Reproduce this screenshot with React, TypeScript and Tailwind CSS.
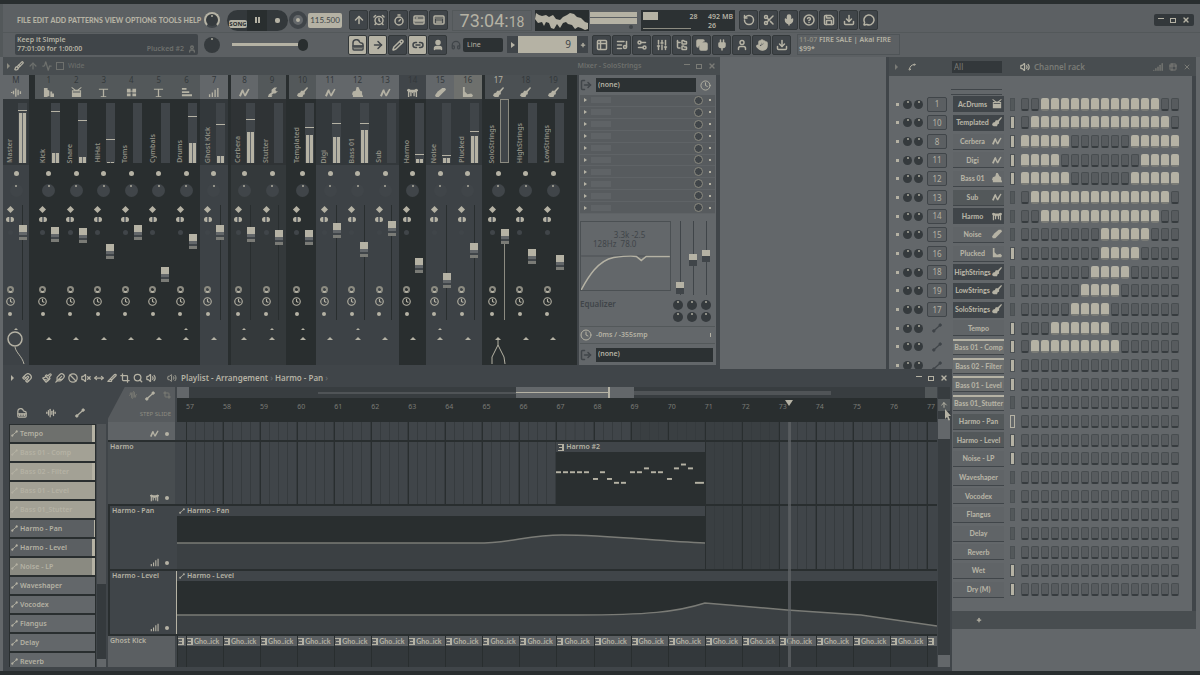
import { clsx } from 'clsx'
import {
  Activity,
  AlarmClock,
  ArrowRight,
  ArrowUp,
  AudioLines,
  AudioWaveform,
  Brush,
  CircleHelp,
  Clock,
  Copy,
  Crop,
  Download,
  Feather,
  FolderTree,
  Hand,
  Headphones,
  Keyboard,
  KeyboardMusic,
  Link2,
  ListMusic,
  LogOut,
  Magnet,
  MessageCircle,
  Mic,
  MoveHorizontal,
  Paintbrush,
  Pencil,
  Piano,
  Plug,
  Plus,
  RotateCcw,
  Save,
  Scissors,
  Search,
  Settings2,
  Signal,
  SlidersVertical,
  Slice,
  Spline,
  Table2,
  Timer,
  User,
  Volume2,
  VolumeX,
  Ban,
  X,
  type LucideIcon,
} from 'lucide-react'

const MENU = ['FILE', 'EDIT', 'ADD', 'PATTERNS', 'VIEW', 'OPTIONS', 'TOOLS', 'HELP']

type Tool = { label: string; icon: LucideIcon; active?: boolean; fill?: boolean }

const RECORD_TOOLS: Tool[] = [
  { label: 'Metronome', icon: ArrowUp },
  { label: 'Wait for input', icon: AlarmClock },
  { label: 'Countdown', icon: Timer },
  { label: 'Overdub', icon: KeyboardMusic },
  { label: 'Loop record', icon: Keyboard },
]

const EDIT_TOOLS: Tool[] = [
  { label: 'Step edit', icon: Piano, active: true },
  { label: 'Auto scroll', icon: ArrowRight, active: true },
  { label: 'Draw', icon: Pencil },
  { label: 'Link', icon: Link2, active: true },
  { label: 'Typing keyboard', icon: User, fill: true },
]

const SYSTEM_TOOLS: Tool[] = [
  { label: 'Undo', icon: RotateCcw },
  { label: 'Cut', icon: Scissors },
  { label: 'Record audio', icon: Mic, fill: true },
  { label: 'Help', icon: CircleHelp },
  { label: 'Save', icon: Save },
  { label: 'Export', icon: Download },
  { label: 'News', icon: MessageCircle },
]

const VIEW_TOOLS: Tool[] = [
  { label: 'Playlist', icon: Table2 },
  { label: 'Piano roll', icon: ListMusic },
  { label: 'Channel rack', icon: Settings2 },
  { label: 'Mixer', icon: SlidersVertical },
  { label: 'Browser', icon: FolderTree },
  { label: 'Copy', icon: Copy, fill: true },
  { label: 'Plugins', icon: Plug, fill: true },
  { label: 'Tempo tapper', icon: User },
  { label: 'Touch', icon: Hand, fill: true },
  { label: 'Download', icon: Download },
]

type Track = {
  id: string
  name: string
  icon: string
  head: string
  body: string
  fader: number
  level?: number
  peak?: number
  send?: boolean
  gap?: boolean
  selected?: boolean
}

const HEAD_DARK = 'bg-[#53585a]'
const HEAD_LIGHT = 'bg-[#63676a]'
const BODY_DARK = 'bg-[#292e2f]'
const BODY_SOFT = 'bg-[#34393b]'
const BODY_LIGHT = 'bg-[#3d4246]'

const MASTER: Track = { id: 'M', name: 'Master', icon: 'wave', head: HEAD_LIGHT, body: BODY_LIGHT, fader: 80, level: 50, peak: 52, send: true }

const TRACKS: Track[] = [
  { id: '1', name: 'Kick', icon: 'kit', head: HEAD_DARK, body: BODY_DARK, fader: 78, level: 10, peak: 51 },
  { id: '2', name: 'Snare', icon: 'drum', head: HEAD_DARK, body: BODY_DARK, fader: 77, level: 6, peak: 42 },
  { id: '3', name: 'HiHat', icon: 'hat', head: HEAD_DARK, body: BODY_DARK, fader: 61, level: 1, peak: 23 },
  { id: '4', name: 'Toms', icon: 'toms', head: HEAD_DARK, body: BODY_DARK, fader: 80 },
  { id: '5', name: 'Cymbals', icon: 'hat', head: HEAD_DARK, body: BODY_DARK, fader: 38 },
  { id: '6', name: 'Drums', icon: 'lines', head: HEAD_DARK, body: BODY_DARK, fader: 71, level: 20, peak: 46, send: true },
  { id: '7', name: 'Ghost Kick', icon: 'bars', head: HEAD_LIGHT, body: BODY_LIGHT, fader: 80, level: 7, peak: 38 },
  { id: '8', name: 'Cerbera', icon: 'zig', head: HEAD_LIGHT, body: BODY_SOFT, fader: 78, level: 31, peak: 43, send: true, gap: true },
  { id: '9', name: 'Stutter', icon: 'wrench', head: HEAD_DARK, body: BODY_SOFT, fader: 75, send: true },
  { id: '10', name: 'Templated', icon: 'guitar', head: HEAD_DARK, body: BODY_DARK, fader: 75, level: 28, peak: 35, send: true, gap: true },
  { id: '11', name: 'Digi', icon: 'zig', head: HEAD_LIGHT, body: BODY_LIGHT, fader: 82, level: 26, peak: 39 },
  { id: '12', name: 'Bass 01', icon: 'bass', head: HEAD_LIGHT, body: BODY_LIGHT, fader: 63, level: 33, peak: 39, send: true },
  { id: '13', name: 'Sub', icon: 'zig', head: HEAD_LIGHT, body: BODY_LIGHT, fader: 84 },
  { id: '14', name: 'Harmo', icon: 'harmo', head: 'bg-[#404549]', body: BODY_DARK, fader: 47, level: 4, peak: 8 },
  { id: '15', name: 'Noise', icon: 'noise', head: HEAD_LIGHT, body: BODY_LIGHT, fader: 32, level: 5, peak: 7, send: true },
  { id: '16', name: 'Plucked', icon: 'pluck', head: 'bg-[#6e706d]', body: BODY_LIGHT, fader: 62, level: 27, peak: 31 },
  { id: '17', name: 'SoloStrings', icon: 'guitar', head: 'bg-[#4b5053]', body: BODY_DARK, fader: 76, gap: true, selected: true },
  { id: '18', name: 'HighStrings', icon: 'guitar', head: 'bg-[#4b5053]', body: BODY_DARK, fader: 56 },
  { id: '19', name: 'LowStrings', icon: 'guitar', head: 'bg-[#4b5053]', body: BODY_DARK, fader: 50 },
]

type Channel = {
  name: string
  no?: string
  icon?: string
  look: string
  on?: number[][]
  select?: 'lit' | 'focus'
}

const FLAT = 'bg-[#606467]'
const DARK = 'bg-[#404549]'
const MIXED = 'bg-[#53585a]'
const GLOW = 'bg-[#6b6e6e] border-t-2 border-t-[#b5b2a4]'

const CHANNELS: Channel[] = [
  { name: 'AcDrums', no: '1', icon: 'drum', look: DARK, on: [[2, 13]] },
  { name: 'Templated', no: '10', icon: 'guitar', look: DARK, on: [[1, 14]], select: 'lit' },
  { name: 'Cerbera', no: '8', icon: 'zig', look: FLAT, on: [[0, 4], [11, 15]], select: 'lit' },
  { name: 'Digi', no: '11', icon: 'zig', look: FLAT, on: [[0, 3], [12, 15]], select: 'lit' },
  { name: 'Bass 01', no: '12', icon: 'bass', look: FLAT, on: [[0, 4], [11, 15]], select: 'lit' },
  { name: 'Sub', no: '13', icon: 'zig', look: MIXED, on: [[1, 14]] },
  { name: 'Harmo', no: '14', icon: 'harmo', look: DARK, on: [[2, 13]] },
  { name: 'Noise', no: '15', icon: 'noise', look: FLAT, on: [[8, 12]] },
  { name: 'Plucked', no: '16', icon: 'pluck', look: FLAT, on: [[8, 11]], select: 'lit' },
  { name: 'HighStrings', no: '18', icon: 'guitar', look: DARK, on: [[7, 10]] },
  { name: 'LowStrings', no: '19', icon: 'guitar', look: DARK, on: [[6, 9]] },
  { name: 'SoloStrings', no: '17', icon: 'guitar', look: DARK, on: [[5, 8]] },
  { name: 'Tempo', look: FLAT, on: [[3, 8]], select: 'lit' },
  { name: 'Bass 01 - Comp', look: GLOW, on: [[1, 9]], select: 'lit' },
  { name: 'Bass 02 - Filter', look: GLOW, select: 'lit' },
  { name: 'Bass 01 - Level', look: GLOW, select: 'lit' },
  { name: 'Bass 01_Stutter', look: GLOW },
  { name: 'Harmo - Pan', look: MIXED, select: 'focus' },
  { name: 'Harmo - Level', look: MIXED, select: 'lit' },
  { name: 'Noise - LP', look: FLAT, select: 'lit' },
  { name: 'Waveshaper', look: FLAT },
  { name: 'Vocodex', look: FLAT },
  { name: 'Flangus', look: FLAT },
  { name: 'Delay', look: FLAT },
  { name: 'Reverb', look: FLAT },
  { name: 'Wet', look: FLAT, select: 'lit' },
  { name: 'Dry (M)', look: FLAT, select: 'lit' },
]

const PICKER = [
  { name: 'Tempo', look: 'bg-[#6e706d] text-[#b5b2a4] border-r-[3px] border-r-[#b5b2a4]' },
  { name: 'Bass 01 - Comp', look: 'bg-[#a3a195] text-[#b5b2a4]' },
  { name: 'Bass 02 - Filter', look: 'bg-[#a3a195] text-[#b5b2a4] border-r-[3px] border-r-[#b5b2a4]' },
  { name: 'Bass 01 - Level', look: 'bg-[#a3a195] text-[#b5b2a4]' },
  { name: 'Bass 01_Stutter', look: 'bg-[#a3a195] text-[#b5b2a4]' },
  { name: 'Harmo - Pan', look: 'bg-[#5b5f62] text-[#b5b2a4] border-r border-r-[#b5b2a4]' },
  { name: 'Harmo - Level', look: 'bg-[#5b5f62] text-[#b5b2a4] border-r-[3px] border-r-[#b5b2a4]' },
  { name: 'Noise - LP', look: 'bg-[#8a8a81] text-[#b5b2a4] border-r-[3px] border-r-[#b5b2a4]' },
  { name: 'Waveshaper', look: 'bg-[#63676a] text-[#b5b2a4]' },
  { name: 'Vocodex', look: 'bg-[#63676a] text-[#b5b2a4]' },
  { name: 'Flangus', look: 'bg-[#63676a] text-[#b5b2a4]' },
  { name: 'Delay', look: 'bg-[#63676a] text-[#b5b2a4]' },
  { name: 'Reverb', look: 'bg-[#63676a] text-[#b5b2a4]' },
]

const BARS = Array.from({ length: 20 }, (_, i) => 57 + i)

// x, y and width of each note, in units of the 149 x 54 clip
const NOTES = [
  [0, 20, 5], [7, 20, 5], [14, 20, 5], [21, 20, 5], [28, 20, 5], [37, 27, 5], [44, 20, 5], [51, 27, 5],
  [58, 31, 5], [65, 31, 5], [74, 20, 5], [81, 20, 5], [88, 16, 5], [95, 20, 5], [102, 20, 5], [111, 27, 5],
  [118, 16, 5], [125, 12, 5], [132, 16, 5], [139, 31, 9],
]

function Glyph({ name, className }: { name: string; className?: string }) {
  const paths: Record<string, string> = {
    wave: 'M0 5.500h1.500v1H0zM2 4h1.500v4H2zM4.500 1.500H6v9H4.500zM7 3h1.500v6H7zM9.500 4.500H11v3H9.500z',
    kit: 'M1 1h4v2l2 1v6H5v1H1zM8 5h2v2h2v4H8z',
    drum: 'M1 0l4 3h2l4-3 .6.8L8.500 3.500H11V11H1V3.500h2.500L.4.800zM2 5v1h8V5z',
    hat: 'M1 2h10v1H6.700v7H9v1H3v-1h2.300V3H1z',
    toms: 'M1 2h4v4H1zM7 2h4v4H7zM1 7h4v3H1zM7 7h4v3H7zM5 4h2v1H5z',
    lines: 'M1 1h5v2H1zM1 4.500h8v2H1zM1 8h11v2H1z',
    bars: 'M1 8h1.500v3H1zM4 6h1.500v5H4zM7 3h1.500v8H7zM10 1h1.500v10H10z',
    zig: 'M0 9.500L3 3l1.500-.5 2 5L10 2l1.500.5L7.500 10H6L4 6 2 10.500z',
    wrench: 'M5 3l3-2.500h3L9 3l1 1.500h2L9 7H7L4.500 9H6l-1 2H1l1-3 3-2z',
    guitar: 'M11 0l1 1-3.500 4.500V8L7 8.500 6 11H2L0 9.500 1 7l2.500-1L4.500 4H7z',
    bass: 'M5 0h2l2 4 2 1v3l1 2v1H1V9l-1-1 1-3 3-1z',
    harmo: 'M0 3l2-1 2 1h4l2-1 2 1v2l-1-1v7h-1.500V6L8.500 5.500V10H7V5.500L6 7 5 5.500V10H3.500V5.500L2.500 6v5H1V4L0 5z',
    noise: 'M8 1h3l1 2-5 5-3 3H1L0 9l3-4z',
    pluck: 'M1 0h2v5l3 3 4-1 2 2-1 2H1z',
  }
  return (
    <svg viewBox="0 0 12 12" className={clsx('shrink-0 fill-[#b5b2a4]', className)} aria-hidden>
      <path d={paths[name]} />
    </svg>
  )
}

function AutomationGlyph({ className }: { className?: string }) {
  return (
    <svg viewBox="0 0 12 12" className={clsx('shrink-0 fill-current stroke-current', className)} aria-hidden>
      <path d="M2 9.500L10 2.500" strokeWidth="1.500" />
      <circle cx="2.200" cy="9.500" r="1.500" />
      <circle cx="9.800" cy="2.500" r="1.500" />
    </svg>
  )
}

function PatternGlyph({ className }: { className?: string }) {
  return (
    <svg viewBox="0 0 6 7" className={clsx('shrink-0 fill-current', className)} aria-hidden>
      <path d="M0 0h6v7H0V6h4V4H1V3h3V1H0z" />
    </svg>
  )
}

function Knob({ className }: { className?: string }) {
  return (
    <span className={clsx('flex shrink-0 justify-center rounded-full bg-[#353a3d]', className)}>
      <span className="mt-px h-0.5 w-0.5 bg-[#b5b2a4]/70" />
    </span>
  )
}

function ToolButton({ label, icon: Icon, active, fill }: Tool) {
  return (
    <button
      type="button"
      aria-label={label}
      className={clsx(
        'flex h-5 w-[19px] items-center justify-center rounded-xs border border-[#33383a]',
        active ? 'bg-[#b5b2a4] text-[#404549]' : 'bg-[#404549] text-[#b5b2a4]',
      )}
    >
      <Icon className="h-3 w-3" strokeWidth={3} fill={fill ? 'currentColor' : 'none'} />
    </button>
  )
}

function WindowButtons({ className }: { className?: string }) {
  return (
    <div className={clsx('flex items-center gap-1', className)}>
      <button type="button" aria-label="Minimize" className="flex h-2 w-2 items-start pt-0.5">
        <span className="h-px w-1.5 bg-current" />
      </button>
      <button type="button" aria-label="Maximize" className="flex h-2 w-2 items-center">
        <span className="h-[5px] w-1.5 border border-current" />
      </button>
      <button type="button" aria-label="Close" className="h-2 w-2">
        <X className="h-2 w-2" strokeWidth={4} />
      </button>
    </div>
  )
}

function Transport() {
  return (
    <div className="flex h-6 items-center">
      <nav className="flex w-[197px] shrink-0 gap-0.5 pl-3.5 font-['Lato',sans-serif] text-[7px] font-black">
        {MENU.map((item) => (
          <button key={item} type="button">
            {item}
          </button>
        ))}
      </nav>
      <div className="flex w-6 justify-center">
        <Knob className="h-4 w-4 border-2 border-[#b5b2a4] border-b-[#404549]" />
      </div>
      <div className="ml-[3px] flex h-[21px] w-[61px] items-center overflow-hidden rounded-full bg-[#33383b]">
        <button type="button" className="mt-2 ml-0.5 h-2 w-[18px] rounded-xs bg-[#b5b2a4] text-[6px] leading-2 font-bold text-[#292e2f]">
          SONG
        </button>
        <button type="button" aria-label="Pause" className="flex h-full w-5 items-center justify-center gap-px bg-[#292e2f]">
          <span className="h-1.5 w-0.5 bg-[#b5b2a4]" />
          <span className="h-1.5 w-0.5 bg-[#b5b2a4]" />
        </button>
        <button type="button" aria-label="Stop" className="flex h-full flex-1 items-center justify-center">
          <span className="h-[5px] w-[5px] rounded-xs bg-[#b5b2a4]" />
        </button>
      </div>
      <button type="button" aria-label="Record" className="ml-px flex h-[18px] w-[18px] items-center justify-center rounded-full border-4 border-[#404549] bg-[#63676a]">
        <span className="h-1 w-1 rounded-full bg-[#b5b2a4]" />
      </button>
      <output className="ml-px flex h-[15px] w-[34px] items-center justify-center rounded-xs bg-[#b5b2a4] font-['Lato',sans-serif] text-[8px] text-[#404549]">
        115.500
      </output>
      <div className="ml-[7px] flex gap-px">
        {RECORD_TOOLS.map((tool) => (
          <ToolButton key={tool.label} {...tool} />
        ))}
      </div>
      <div className="ml-1 flex h-[21px] w-20 items-baseline justify-center border border-[#53585a] font-['Roboto',sans-serif] leading-[19px]">
        <span className="text-[18px]">73:04:</span>
        <span className="text-[14px]">18</span>
      </div>
      <div className="ml-[3px] h-[21px] w-[54px] bg-[#292e2f]">
        <svg viewBox="0 0 54 21" preserveAspectRatio="none" className="h-full w-full fill-[#b5b2a4]" aria-hidden>
          <path d="M1 3l3 2 3 1 4-1 3 2 4-2 3 4 4 1 3-3 4-2 3-2 4 1 3 3 4 1 4 4 3 1v6l-3 1-4-2-3-1-3 2-3-4-4-1-2-2-3 1-3 5-3-4-3 5-3-1-2-5-3-1-2 4-2-4-4 1-3-4z" />
        </svg>
      </div>
      <div className="ml-px flex h-[21px] w-[47px] flex-col gap-px pt-0.5">
        <span className="h-[5px] bg-[#b5b2a4]" />
        <span className="h-[6px] bg-[#b5b2a4]" />
        <span className="mr-1 h-1 w-1 self-end rounded-full bg-[#404549]" />
      </div>
      <div className="ml-1 flex h-[21px] w-[94px] justify-between bg-[#2c3133] p-0.5 text-[7px] leading-[9px] font-semibold">
        <div className="flex flex-col justify-between">
          <span className="h-2 w-[15px] bg-[#b5b2a4]" />
          <span className="h-px w-12 bg-[#8c8b81]" />
        </div>
        <span className="-ml-3">28</span>
        <div className="flex flex-col">
          <span>492 MB</span>
          <span>26</span>
        </div>
      </div>
      <div className="ml-1 flex gap-px">
        {SYSTEM_TOOLS.map((tool) => (
          <ToolButton key={tool.label} {...tool} />
        ))}
      </div>
      <WindowButtons className="mr-1.5 ml-auto h-3 rounded-xs bg-[#33383b] px-1" />
    </div>
  )
}

function PatternBar() {
  return (
    <div className="flex h-[23px] items-center">
      <div className="ml-3 flex h-[21px] w-[183px] items-end justify-between rounded-xs bg-[#404549] px-0.5 text-[7px] leading-[9px] font-semibold">
        <div className="flex flex-col pb-0.5">
          <span>Keep it Simple</span>
          <span>77:01:00 for 1:00:00</span>
        </div>
        <div className="flex items-center gap-1 pb-0.5 text-[#6e706d]">
          <span>Plucked #2</span>
          <User className="h-2 w-2" strokeWidth={4} />
        </div>
      </div>
      <div className="ml-0.5 flex w-6 justify-center">
        <Knob className="h-4 w-4" />
      </div>
      <input
        type="range"
        aria-label="Master pitch"
        defaultValue={100}
        className="ml-2 h-3 w-[76px] appearance-none bg-[linear-gradient(#b5b2a4,#b5b2a4)] bg-[length:68px_3px] bg-left bg-no-repeat [&::-webkit-slider-thumb]:h-3 [&::-webkit-slider-thumb]:w-2.5 [&::-webkit-slider-thumb]:appearance-none [&::-webkit-slider-thumb]:rounded-full [&::-webkit-slider-thumb]:bg-[#292e2f]"
      />
      <div className="ml-10 flex gap-px">
        {EDIT_TOOLS.map((tool) => (
          <ToolButton key={tool.label} {...tool} />
        ))}
      </div>
      <Headphones className="ml-1 h-2.5 w-2.5 text-[#404549]" strokeWidth={3} />
      <select aria-label="Snap" className="ml-0.5 h-3.5 w-10 appearance-none rounded-xs bg-[#2c3133] px-1 text-[7px] leading-3">
        <option>Line</option>
      </select>
      <div className="ml-1 flex h-[17px] w-[81px]">
        <button type="button" aria-label="Previous pattern" className="flex w-[11px] items-center justify-center bg-[#404549]">
          <span className="border-y-3 border-l-4 border-y-transparent border-l-[#b5b2a4]" />
        </button>
        <output className="flex-1 bg-[#b5b2a4] pr-1.5 text-right text-[10px] leading-4 text-[#404549]">9</output>
        <button type="button" aria-label="Add pattern" className="flex w-[11px] items-center justify-center bg-[#404549]">
          <Plus className="h-1.5 w-1.5" strokeWidth={5} />
        </button>
      </div>
      <div className="ml-1 flex gap-px">
        {VIEW_TOOLS.map((tool) => (
          <ToolButton key={tool.label} {...tool} />
        ))}
      </div>
      <div className="ml-1.5 h-[21px] w-[103px] overflow-hidden border border-[#4f5457] pl-px text-[7px] leading-[9px] font-semibold">
        <p>
          <span className="text-[#8c8b81]">11-07</span> FIRE SALE | Akai FIRE
        </p>
        <p>$99*</p>
      </div>
    </div>
  )
}

function StereoKnobs() {
  return (
    <>
      <span className="mb-[5px] h-[5px] w-[5px] rotate-45 bg-[#b5b2a4]" />
      <span className="h-[5px] w-2 rounded-full border-x-3 border-[#b5b2a4] bg-[#63676a]" />
    </>
  )
}

function MixerTrack({ track, className }: { track: Track; className?: string }) {
  return (
    <div className={clsx('flex min-w-0 flex-col items-center', track.body, className)}>
      <div className={clsx('flex h-6 w-full flex-col items-center justify-between pb-px', track.head)}>
        <span className={clsx('text-[8px] leading-[10px]', track.selected ? 'text-[#b5b2a4]' : 'text-[#33383b]')}>{track.id}</span>
        <Glyph name={track.icon} className="h-[11px] w-[11px]" />
      </div>
      <div className="flex h-[66px] w-full items-end justify-center gap-1 bg-[#292e2f]/50 pb-0.5">
        <span className="w-[9px] rotate-180 text-[7px] leading-[9px] font-semibold whitespace-nowrap text-[#8c8b81] [writing-mode:vertical-rl]">
          {track.name}
        </span>
        <div
          className={clsx(
            'flex w-[9px] flex-col justify-end bg-[#404549]',
            track.selected ? 'h-16 border border-[#8c8b81]' : 'h-[60px]',
          )}
        >
          {track.peak && <span className="h-px w-full bg-[#b5b2a4]" />}
          {track.level && (
            <span
              className="mx-px border-x-3 border-[#b5b2a4] bg-[#63676a]"
              style={{ height: track.level, marginTop: (track.peak ?? 0) - track.level }}
            />
          )}
        </div>
      </div>
      <span className="mt-1.5 h-[5px] w-[5px] rounded-full bg-[#b5b2a4]" />
      <Knob className="mt-2 h-[13px] w-[13px] !bg-[#404549]" />
      <div className="mt-2 flex h-[115px] w-full justify-center gap-1">
        <div className="flex w-[9px] flex-col items-center pt-0.5">
          <StereoKnobs />
          <span className="mt-2 h-[5px] w-[5px] rounded-full bg-[#404549]" />
          <span className="mt-[51px] h-[7px] w-[7px] rounded-full border-2 border-[#8c8b81] border-b-[#b5b2a4]" />
          <Clock className="mt-1 h-[9px] w-[9px] text-[#b5b2a4]" strokeWidth={3} />
          <span className="mt-1.5 h-1 w-1 rounded-full bg-[#b5b2a4]" />
        </div>
        <input
          type="range"
          aria-label={`${track.name} volume`}
          defaultValue={track.fader}
          className={clsx(
            'h-[115px] w-2 appearance-none bg-[length:1px_100%] bg-center bg-no-repeat [direction:rtl] [writing-mode:vertical-lr] [&::-webkit-slider-thumb]:h-[15px] [&::-webkit-slider-thumb]:w-2 [&::-webkit-slider-thumb]:appearance-none [&::-webkit-slider-thumb]:bg-[linear-gradient(#b5b2a4_7px,#63676a_7px,#63676a_10px,#404549_10px,#404549_12px,#7a7b76_12px)]',
            track.selected ? 'bg-[linear-gradient(transparent_35px,#8c8b81_35px)]' : 'bg-[linear-gradient(#292e2f,#292e2f)]',
          )}
        />
      </div>
      <div className="flex flex-col items-center gap-1.5 pt-2">
        <span className={clsx('border-x-2 border-b-2 border-x-transparent', track.send ? 'border-b-[#b5b2a4]' : 'border-b-transparent')} />
        <span className="mt-px border-x-3 border-b-3 border-x-transparent border-b-[#b5b2a4]" />
      </div>
      {track.selected && (
        <svg viewBox="0 0 20 24" className="h-6 w-5 fill-none stroke-[#b5b2a4]" aria-hidden>
          <path d="M10 0v5M10 5L4 17v7M10 5l6 12 1 7" />
        </svg>
      )}
    </div>
  )
}

function EffectSlots() {
  return (
    <ul className="flex h-[119px] flex-col bg-[#575b5e]">
      {Array.from({ length: 10 }, (_, i) => (
        <li key={i} className="flex flex-1 items-center justify-between border-b border-[#5f6366] pr-1 pl-1">
          <span className="border-y-2 border-l-3 border-y-transparent border-l-[#b5b2a4]" />
          <span className="ml-1 h-1.5 w-5 bg-[#5f6366]" />
          <span className="ml-auto h-[9px] w-[9px] rounded-full border border-[#8c8b81] bg-[#404549]" />
          <span className="ml-1.5 h-0.5 w-0.5 bg-[#b5b2a4]" />
        </li>
      ))}
    </ul>
  )
}

function Equalizer() {
  const bands = [2, 47, 54]
  return (
    <div className="flex flex-col pt-[7px]">
      <div className="flex gap-1">
        <div className="relative h-[70px] w-[91px] border border-[#4b5053]">
          <svg viewBox="0 0 90 69" className="h-full w-full fill-none stroke-[#b5b2a4]" aria-hidden>
            <path d="M0 34.500h90" className="stroke-[#4b5053]" />
            <path d="M0 69C7 56 17 39 33 36c8-1 17-2 23-1l5 4 5-4h24" strokeWidth="1.500" />
          </svg>
          <p className="absolute top-2 left-3 text-[8px] leading-[9px] whitespace-pre text-[#404549]">
            {'          3.3k -2.5\n128Hz  78.0'}
          </p>
        </div>
        <div className="flex flex-1 justify-between pr-1">
          {bands.map((gain, i) => (
            <input
              key={i}
              type="range"
              aria-label={`Band ${i + 1} gain`}
              defaultValue={gain}
              className="h-[74px] w-2.5 appearance-none bg-[linear-gradient(#404549,#404549)] bg-[length:1px_100%] bg-center bg-no-repeat [direction:rtl] [writing-mode:vertical-lr] [&::-webkit-slider-thumb]:h-3 [&::-webkit-slider-thumb]:w-2 [&::-webkit-slider-thumb]:appearance-none [&::-webkit-slider-thumb]:bg-[linear-gradient(#b5b2a4_6px,#404549_6px)]"
            />
          ))}
        </div>
      </div>
      <div className="flex h-[31px] justify-between pt-[3px] pr-1 text-[8px] text-[#404549]">
        <span className="font-semibold">Equalizer</span>
        <div className="grid grid-cols-3 content-start gap-x-1 gap-y-0.5 pt-0.5">
          {Array.from({ length: 6 }, (_, i) => (
            <Knob key={i} className="h-2.5 w-2.5" />
          ))}
        </div>
      </div>
    </div>
  )
}

function Mixer() {
  return (
    <section className="absolute top-0 left-0 flex h-[312px] w-[717px] flex-col bg-[#404549]">
      <header className="flex h-[18px] items-center gap-1 bg-[#484d50] px-1 text-[7px] text-[#6e706d]">
        <span className="border-y-3 border-l-3 border-y-transparent border-l-[#8c8b81]" />
        <Brush className="h-2.5 w-2.5 text-[#b5b2a4]" strokeWidth={3} />
        <ArrowUp className="h-2.5 w-2.5" strokeWidth={3} />
        <Activity className="h-2.5 w-2.5" strokeWidth={3} />
        <span className="h-2 w-2 border border-current" />
        <span>Wide</span>
        <h2 className="ml-[489px] font-semibold">Mixer - SoloStrings</h2>
        <WindowButtons className="ml-auto text-[#7a7b76]" />
      </header>
      <div className="flex h-[290px]">
        <div className="flex flex-1 bg-[#292e2f] pr-2.5">
          <div className="relative flex">
            <MixerTrack track={MASTER} className="w-[26px]" />
            <svg viewBox="0 0 26 40" className="absolute bottom-0 left-0 h-10 w-[26px] fill-none stroke-[#b5b2a4]" aria-hidden>
              <circle cx="12" cy="14" r="7" strokeWidth="1.500" className="fill-[#404549]" />
              <path d="M12 22c1 6 7 9 9 17" />
            </svg>
          </div>
          <div className="ml-1.5 flex flex-1">
            {TRACKS.map((track) => (
              <MixerTrack key={track.id} track={track} className={clsx('flex-1', track.gap && 'ml-[3px]')} />
            ))}
          </div>
        </div>
        <aside className="mr-1 ml-0.5 flex w-[137px] flex-col bg-[#63676a] px-px">
          <div className="flex h-5 items-center gap-1 text-[7px]">
            <LogOut className="h-3 w-3 text-[#404549]" strokeWidth={3} />
            <select aria-label="Input" className="h-3.5 w-[100px] appearance-none bg-[#2c3133] px-0.5 font-semibold">
              <option>(none)</option>
            </select>
            <Clock className="h-[11px] w-[11px]" strokeWidth={2} />
          </div>
          <EffectSlots />
          <Equalizer />
          <div className="flex h-[18px] items-center gap-1 border-y border-[#53585a] text-[7px] font-semibold">
            <Clock className="h-3 w-3" strokeWidth={2} />
            <span>-0ms / -355smp</span>
            <span className="mr-1 ml-auto h-1 w-px bg-[#b5b2a4]" />
          </div>
          <div className="flex flex-1 items-center gap-1 pr-0.5 text-[7px]">
            <LogOut className="h-3 w-3 text-[#404549]" strokeWidth={3} />
            <select aria-label="Output" className="h-3.5 flex-1 appearance-none bg-[#2c3133] px-0.5 font-semibold">
              <option>(none)</option>
            </select>
          </div>
        </aside>
      </div>
    </section>
  )
}

function ChannelRow({ channel }: { channel: Channel }) {
  const isOn = (step: number) => (channel.on ?? []).some(([from, to]) => step >= from && step <= to)
  return (
    <li className="flex items-center">
      <span className="ml-[7px] h-[3px] w-[3px] bg-[#b5b2a4]" />
      <Knob className="ml-1 h-[9px] w-[9px]" />
      <Knob className="ml-0.5 h-[9px] w-[9px]" />
      <span className="ml-1 flex h-[15px] w-5 items-center justify-center">
        {channel.no ? (
          <span className="flex h-full w-full items-center justify-center rounded-xs border border-[#404549] bg-[#5b5f62] text-[8px]">{channel.no}</span>
        ) : (
          <AutomationGlyph className="h-2.5 w-2.5 text-[#404549]" />
        )}
      </span>
      <button
        type="button"
        className={clsx(
          "ml-1.5 flex h-4 w-[51px] shrink-0 items-center border-b border-b-[#404549] font-['Lato',sans-serif] text-[7px] font-black whitespace-nowrap",
          channel.icon && 'pr-0.5',
          channel.look,
        )}
      >
        <span className="flex-1 text-center">{channel.name}</span>
        {channel.icon && <Glyph name={channel.icon} className="h-2.5 w-2.5" />}
      </button>
      <span
        className={clsx(
          'ml-1.5 h-[13px] w-[5px] border border-[#4b5053]',
          channel.select === 'lit' && 'bg-[#b5b2a4]',
          channel.select === 'focus' && '!border-[#b5b2a4]',
          !channel.select && 'bg-[#53585a]',
        )}
      />
      <div className="ml-1.5 flex gap-0.5">
        {Array.from({ length: 16 }, (_, step) => (
          <button
            key={step}
            type="button"
            aria-label={`${channel.name} step ${step + 1}`}
            aria-pressed={isOn(step)}
            className={clsx(
              'h-[13px] w-2 rounded-xs border-b-2',
              isOn(step) ? 'border-b-[#7a7b76] bg-[#b5b2a4]' : 'border border-[#484d50] border-b-[#373c3f] bg-[#575b5e]',
            )}
          />
        ))}
      </div>
    </li>
  )
}

function ChannelRack() {
  return (
    <section className="absolute top-0 right-1 w-[310px] bg-[#404549] pl-[3px]">
      <header className="flex h-[19px] items-center bg-[#484d50] text-[9px] text-[#7a7b76]">
        <span className="ml-1.5 border-y-3 border-l-3 border-y-transparent border-l-current" />
        <Spline className="ml-2.5 h-2 w-2 text-[#b5b2a4]" strokeWidth={3} />
        <select aria-label="Filter" className="ml-9 h-3 w-[50px] appearance-none bg-[#33383b] px-0.5 text-[8px]">
          <option>All</option>
        </select>
        <Volume2 className="ml-[18px] h-2.5 w-2.5 text-[#b5b2a4]" strokeWidth={3} />
        <h2 className="ml-1 text-[8px] font-semibold">Channel rack</h2>
        <Signal className="mr-1.5 ml-auto h-2.5 w-2.5" strokeWidth={3} />
        <Table2 className="mr-1.5 h-2 w-2" strokeWidth={3} />
        <X className="mr-[5px] h-2 w-2" strokeWidth={3} />
      </header>
      <div className="mr-1 flex flex-col bg-[#63676a] pt-[13px] pb-3">
        <span className="ml-[62px] h-1.5 w-[51px] border-y border-[#404549]" />
        <ul className="grid h-[504px] auto-rows-fr">
          {CHANNELS.map((channel) => (
            <ChannelRow key={channel.name} channel={channel} />
          ))}
        </ul>
      </div>
      <footer className="flex h-[18px] items-center bg-[#484d50] pl-[87px]">
        <button type="button" aria-label="Add channel">
          <Plus className="h-1.5 w-1.5" strokeWidth={5} />
        </button>
      </footer>
    </section>
  )
}

const PLAYLIST_TOOLS = [Magnet, Paintbrush, Feather, Ban, VolumeX, MoveHorizontal, Slice, Crop, Search, Volume2]

function LaneGrid() {
  return (
    <div className="absolute inset-0 grid grid-cols-[9px_repeat(20,minmax(0,1fr))_10px]">
      <span />
      {BARS.map((bar) => (
        <span
          key={bar}
          className={clsx(
            'border-l border-[#292e2f] bg-[linear-gradient(90deg,transparent_calc(100%-1px),#363b3e_0)] bg-[length:25%_100%]',
            bar >= 69 && bar < 73 && 'bg-[#3a3f42]',
          )}
        />
      ))}
      <span className="border-l border-[#292e2f]" />
    </div>
  )
}

function TrackHead({ name, glyph, className }: { name: string; glyph?: string; className?: string }) {
  return (
    <div className={clsx('flex w-[67px] shrink-0 flex-col justify-between px-0.5 text-[7px] leading-[10px] font-semibold', className)}>
      <span>{name}</span>
      {glyph && (
        <div className="flex items-center justify-end gap-1.5 pr-1 pb-0.5">
          <Glyph name={glyph} className="h-[9px] w-[9px]" />
          <span className="h-1 w-1 rounded-full bg-[#b5b2a4]" />
        </div>
      )}
    </div>
  )
}

function AutomationClip({ name, curve, width, height }: { name: string; curve: string; width: number; height: number }) {
  return (
    <div className="absolute inset-y-0 left-0 flex flex-col bg-[#292e2f]" style={{ width: `${(width / 760) * 100}%` }}>
      <div className="flex h-2.5 items-center gap-0.5 bg-[#404549] px-0.5 text-[7px] leading-[10px] font-semibold">
        <AutomationGlyph className="h-1.5 w-1.5" />
        {name}
      </div>
      <svg viewBox={`0 0 ${width} ${height}`} preserveAspectRatio="none" className="min-h-0 w-full flex-1" aria-hidden>
        <path d={`${curve}V${height}H0z`} className="fill-[#3b4043]" />
        <path d={curve} className="fill-none stroke-[#7a7b76]" strokeWidth="1.500" />
      </svg>
    </div>
  )
}

function Playlist() {
  return (
    <section className="absolute top-[312px] right-[248px] bottom-0 left-0 flex flex-col bg-[#404549] pt-px pr-0.5 pb-1">
      <header className="mb-px flex h-4 items-center pr-0.5 pl-2 text-[9px]">
        <span className="mr-2 border-y-3 border-l-3 border-y-transparent border-l-[#b5b2a4]" />
        {PLAYLIST_TOOLS.map((Icon, i) => (
          <button key={i} type="button" aria-label={`Playlist tool ${i + 1}`} className={clsx('w-[13px]', i === 0 && 'mr-[7px]')}>
            <Icon className="h-2.5 w-2.5" strokeWidth={3} />
          </button>
        ))}
        <Volume2 className="mr-1 ml-2 h-2.5 w-2.5" strokeWidth={2} />
        <h2 className="text-[8px] font-semibold">
          Playlist - Arrangement <span className="text-[#63676a]">›</span> Harmo - Pan <span className="text-[#63676a]">›</span>
        </h2>
        <WindowButtons className="ml-auto" />
      </header>
      <div className="flex min-h-0 flex-1">
        <div className="flex w-[105px] shrink-0 flex-col pl-1.5">
          <div className="flex h-[37px] items-end gap-[19px] pb-1.5 pl-2">
            <Piano className="h-2.5 w-2.5" strokeWidth={3} />
            <AudioLines className="h-2.5 w-2.5" strokeWidth={3} />
            <AutomationGlyph className="h-2.5 w-2.5" />
          </div>
          <div className="flex min-h-0 flex-1">
            <ul className="flex w-[87px] flex-col gap-0.5 overflow-hidden bg-[#292e2f] p-px text-[7px] leading-[17px] font-semibold">
              {PICKER.map((item) => (
                <li key={item.name} className={clsx('flex h-[17px] shrink-0 items-center gap-0.5 pl-px', item.look)}>
                  <AutomationGlyph className="h-[7px] w-[7px]" />
                  {item.name}
                </li>
              ))}
            </ul>
            <div className="ml-px flex w-[9px] flex-col bg-[#353a3d]">
              <span className="h-[160px] bg-[#505457]" />
              <span className="mt-auto h-2 bg-[#63676a]" />
            </div>
          </div>
        </div>
        <div className="relative flex min-w-0 flex-1 flex-col">
          <div className="flex h-[35px]">
            <div className="flex w-[67px] shrink-0 flex-col items-end justify-between bg-[#575b5e] p-1 [clip-path:polygon(25%_0,100%_0,100%_100%,0_100%,0_90%)]">
              <span className="flex gap-2">
                <AudioWaveform className="h-2 w-2 text-[#8c8b81]" />
                <AutomationGlyph className="h-2.5 w-2.5" />
                <Crop className="h-2 w-2 text-[#8c8b81]" />
              </span>
              <span className="text-[6px] leading-[7px] text-[#8c8b81]">STEP SLIDE</span>
            </div>
            <div className="ml-0.5 flex flex-1 flex-col">
              <div className="flex h-[11px] items-center bg-[#383d40]">
                <span className="h-full w-3 bg-[#63676a]" />
                <span className="ml-[17%] h-0.5 w-[26%] bg-[#505457]" />
                <span className="flex h-full w-[15.500%] items-center bg-[#63676a]">
                  <span className="h-px w-full bg-[#b5b2a4]" />
                  <span className="mr-6 h-full w-0.5 shrink-0 bg-[#b5b2a4]" />
                </span>
                <span className="h-1 w-[26%] bg-[#505457]" />
                <span className="ml-auto h-full w-3 bg-[#53585a]" />
              </div>
              <div className="relative h-6 bg-[#292e2f]">
                <div className="grid grid-cols-[9px_repeat(20,minmax(0,1fr))_10px] pt-1 text-[7px] leading-[9px] text-[#7a7b76]">
                  <span />
                  {BARS.map((bar) => (
                    <span key={bar}>{bar}</span>
                  ))}
                  <span>77</span>
                </div>
                <span className="absolute top-0.5 left-[80%] border-x-4 border-t-6 border-x-transparent border-t-[#b5b2a4]" />
              </div>
            </div>
          </div>
          <div className="flex h-5 border-b-2 border-[#292e2f]">
            <TrackHead name="" glyph="zig" className="bg-[#5f6366]" />
            <div className="relative ml-0.5 flex-1">
              <LaneGrid />
            </div>
          </div>
          <div className="flex h-16 border-b-2 border-[#292e2f]">
            <TrackHead name="Harmo" glyph="harmo" className="bg-[#484d50]" />
            <div className="relative ml-0.5 flex-1">
              <LaneGrid />
              <div className="absolute inset-y-0 left-[49.900%] flex w-[19.600%] flex-col bg-[#2a2f30]">
                <div className="flex h-2.5 items-center gap-0.5 bg-[#404549] px-0.5 text-[7px] leading-[10px] font-semibold">
                  <PatternGlyph className="h-[7px] w-1.5" />
                  Harmo #2
                </div>
                <svg viewBox="0 0 149 54" preserveAspectRatio="none" className="min-h-0 w-full flex-1 fill-[#b5b2a4]" aria-hidden>
                  {NOTES.map(([x, y, w]) => (
                    <rect key={x} x={x} y={y} width={w} height="2" />
                  ))}
                </svg>
              </div>
            </div>
          </div>
          <div className="flex h-[65px] border-b-2 border-[#292e2f]">
            <TrackHead name="Harmo - Pan" glyph="bars" className="border-l-2 border-[#292e2f]" />
            <div className="relative ml-0.5 flex-1">
              <LaneGrid />
              <AutomationClip name="Harmo - Pan" width={528} height={53} curve="M0 27H300C335 27 350 19 385 19C430 19 480 25 528 27" />
            </div>
          </div>
          <div className="flex h-[65px] border-b-2 border-[#292e2f]">
            <TrackHead name="Harmo - Level" glyph="bars" className="border-l-2 border-[#292e2f]" />
            <div className="relative ml-px flex-1 border-l border-[#b5b2a4]">
              <AutomationClip name="Harmo - Level" width={760} height={53} curve="M0 34H400C470 34 500 31 528 22L610 29L684 34L760 45" />
            </div>
          </div>
          <div className="flex min-h-0 flex-1">
            <TrackHead name="Ghost Kick" className="bg-[#5b5f62]" />
            <div className="ml-0.5 grid flex-1 grid-cols-[9px_repeat(20,minmax(0,1fr))_10px] bg-[#33383b] font-['Lato',sans-serif] text-[7px] leading-[10px] font-bold">
              {['', ...BARS, ''].map((bar, i) => (
                <div key={i} className="border-l border-[#292e2f]">
                  <div className="flex h-2.5 items-center gap-px bg-[#5b5f62] whitespace-nowrap">
                    <PatternGlyph className="h-[7px] w-1.5" />
                    {bar && <span>Gho..ick</span>}
                  </div>
                </div>
              ))}
            </div>
          </div>
          <span className="pointer-events-none absolute top-[35px] bottom-0 left-[82%] w-[3px] bg-[#63676a]/70" />
        </div>
        <div className="ml-px flex w-3 shrink-0 flex-col bg-[#373c3f] pt-3">
          <span className="flex h-3 items-center justify-center bg-[#53585a]">
            <ArrowUp className="h-2 w-2" strokeWidth={3} />
          </span>
          <span className="mt-2 h-5 bg-[#63676a]" />
          <span className="mt-auto h-3 bg-[#63676a]" />
        </div>
      </div>
      <svg viewBox="0 0 8 12" className="pointer-events-none absolute top-10 right-0 h-3 w-2 fill-[#b5b2a4]" aria-hidden>
        <path d="M1 0l6 7H4.500L6 11l-1.500.5L3 8 1 10z" />
      </svg>
    </section>
  )
}

export default function App() {
  return (
    <div className="flex min-h-screen flex-col border-t-4 border-b-4 border-[#292e2f] bg-[#63676a] font-['Noto_Sans',sans-serif] text-[#b5b2a4]">
      <header className="flex flex-col border-l-3 border-[#53585a] bg-[#5c6063] pt-1 pb-px">
        <Transport />
        <span className="h-px bg-[#53585a]" />
        <PatternBar />
      </header>
      <main className="relative min-h-[614px] flex-1 border-l-3 border-[#63676a]">
        <ChannelRack />
        <Mixer />
        <Playlist />
      </main>
    </div>
  )
}
